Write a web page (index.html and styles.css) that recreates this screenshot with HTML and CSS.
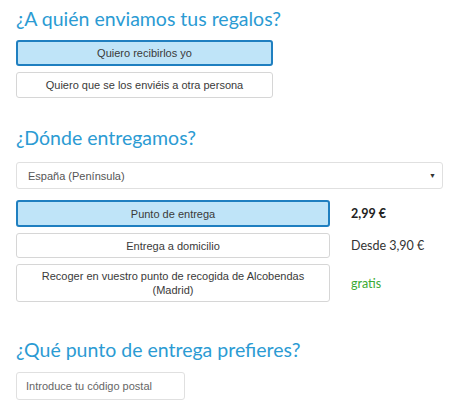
FILE: index.html
```html
<!DOCTYPE html>
<html lang="es">
<head>
<meta charset="utf-8">
<link rel="stylesheet" href="styles.css">
</head>
<body>
<div class="page">
  <section class="block block-who">
    <h2 class="title">¿A quién enviamos tus regalos?</h2>
    <div class="options">
      <button class="opt opt-who active">Quiero recibirlos yo</button>
      <button class="opt opt-who">Quiero que se los enviéis a otra persona</button>
    </div>
  </section>

  <section class="block block-where">
    <h2 class="title">¿Dónde entregamos?</h2>
    <div class="select">
      <span class="select-text">España (Península)</span>
      <span class="select-arrow">▼</span>
    </div>
    <div class="ship">
      <button class="opt active">Punto de entrega</button>
      <span class="price price-bold">2,99 €</span>
      <button class="opt opt-home">Entrega a domicilio</button>
      <span class="price">Desde 3,90 €</span>
      <button class="opt opt-tall">Recoger en vuestro punto de recogida de Alcobendas (Madrid)</button>
      <span class="price price-free">gratis</span>
    </div>
  </section>

  <section class="block block-point">
    <h2 class="title">¿Qué punto de entrega prefieres?</h2>
    <div class="input"><span class="placeholder">Introduce tu código postal</span></div>
  </section>
</div>
</body>
</html>
```

FILE: styles.css
```css
* { box-sizing: border-box; }
html, body { margin: 0; padding: 0; background: #fff; }
body { font-family: "Liberation Sans", Arial, sans-serif; color: #333; }
.page { padding: 0 16px; width: 474px; height: 414px; overflow: hidden; }

.title {
  font-family: Lato, "Noto Sans", sans-serif;
  font-weight: 400;
  font-size: 19.5px;
  line-height: 24px;
  color: #2b9bd3;
  margin: 0;
}
.block-who .title { padding-top: 7px; margin-bottom: 9px; }
.block-where { padding-top: 28px; }
.block-where .title { margin-bottom: 12px; }
.block-point { padding-top: 36px; }
.block-point .title { margin-bottom: 10px; }

.options { display: flex; flex-direction: column; gap: 6px; width: 257px; }

.opt {
  display: flex;
  align-items: center;
  justify-content: center;
  text-align: center;
  height: 26px;
  padding: 0 8px;
  background: #fff;
  border: 1px solid #d6d6d6;
  border-radius: 3px;
  font-family: "Liberation Sans", Arial, sans-serif;
  font-size: 11px;
  line-height: 14px;
  color: #3a3a3a;
}
.opt.active {
  background: #bfe4f8;
  border: 2px solid #1f7fc0;
}

.select {
  display: flex;
  align-items: center;
  justify-content: space-between;
  width: 427px;
  height: 27px;
  border: 1px solid #e0e0e0;
  border-radius: 3px;
  padding: 0 6px 0 11px;
  font-size: 11px;
  color: #555;
  margin-bottom: 11px;
}
.select-arrow { font-size: 7px; color: #333; }

.ship {
  display: grid;
  grid-template-columns: 314px auto;
  column-gap: 21px;
  row-gap: 6px;
  align-items: center;
}
.ship .opt { height: 27px; }
.ship .opt-home { height: 25px; }
.ship .opt-tall { height: 38px; padding: 0 20px; }

.price {
  font-family: Lato, "Noto Sans", sans-serif;
  font-size: 12.5px;
  color: #333;
}
.price-bold { font-weight: 700; color: #222; }
.price-free { color: #3aaa35; }

.input {
  width: 169px;
  height: 28px;
  border: 1px solid #e0e0e0;
  border-radius: 3px;
  display: flex;
  align-items: center;
  padding-left: 9px;
}
.placeholder { font-size: 11px; color: #666; }
```
